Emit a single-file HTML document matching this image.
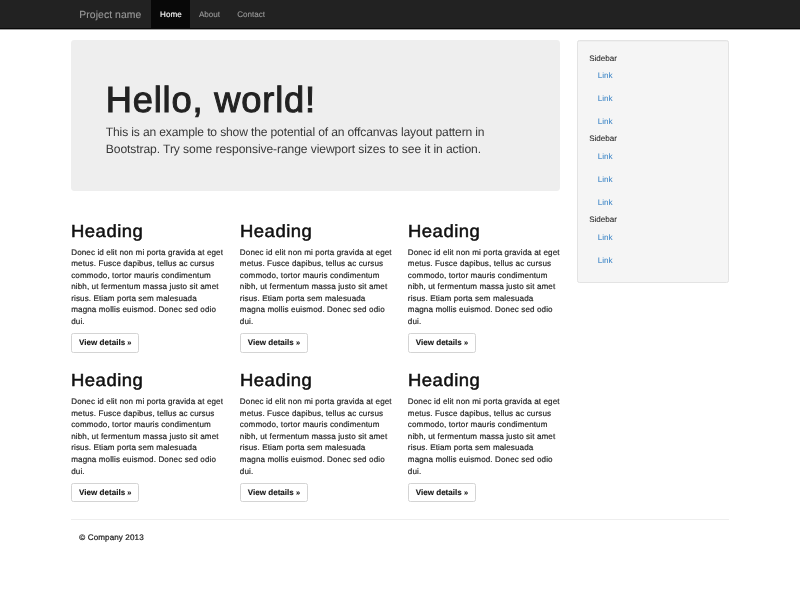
<!DOCTYPE html>
<html><head><meta charset="utf-8"><title>Off Canvas Template for Bootstrap</title>
<style>
*{box-sizing:border-box}
html,body{margin:0;padding:0;background:#fff;overflow:hidden}
#z{zoom:0.5766;-webkit-font-smoothing:antialiased;will-change:transform;text-rendering:geometricPrecision;-webkit-text-stroke-width:0.4px;width:1387px;height:1041px;position:relative;font-family:"Liberation Sans",sans-serif;font-size:14px;line-height:20px;color:#333;overflow:hidden}
.navbar{position:absolute;top:0;left:0;width:1387px;height:51px;background:#222;border-bottom:1px solid #080808}
.brand{position:absolute;left:122.5px;top:2.4px;letter-spacing:0.15px;-webkit-text-stroke-width:0.2px;padding:15px;font-size:18px;line-height:20px;color:#999;white-space:nowrap}
.nav{position:absolute;top:0;left:262.7px;margin:0;padding:0;list-style:none;white-space:nowrap}
.nav li{float:left}
.nav a{display:block;-webkit-text-stroke-width:0.2px;padding:15px;line-height:20px;color:#999;text-decoration:none}
.nav li.active a{background:#080808;color:#fff}
.jumbo{position:absolute;left:123.5px;top:70px;width:847.5px;height:261.2px;background:#eee;border-radius:6px;padding:48px 60px}
.jumbo h1{margin:23.9px 0 6.1px -0.3px;letter-spacing:1.4px;-webkit-text-stroke:1.7px #222;font-size:63px;line-height:63px;font-weight:normal;color:#222;white-space:nowrap}
.jumbo p{margin:0;position:relative;top:4.2px;letter-spacing:-0.2px;-webkit-text-stroke-width:0px;font-size:21px;line-height:29.4px;color:#383838;white-space:nowrap}
.col{position:absolute;width:262.5px}
.col h2{margin:0;position:relative;top:1.6px;letter-spacing:0.85px;-webkit-text-stroke:0.85px #111;transform:scaleX(1.05);transform-origin:0 0;font-size:30.5px;line-height:33px;font-weight:normal;color:#111;white-space:nowrap}
.col p{margin:10px 0 0;position:relative;top:2.2px;letter-spacing:0.2px;-webkit-text-stroke:0.3px #222;color:#222;white-space:nowrap}
.btn{display:inline-block;height:34px;padding:4.8px 12px 7.2px;border:1px solid #d4d4d4;letter-spacing:0px;-webkit-text-stroke-width:0.2px;border-radius:4px;font-weight:bold;color:#111;text-decoration:none;line-height:20px;white-space:nowrap}
.well{position:absolute;left:1001px;top:70px;width:262.5px;height:420px;background:#f5f5f5;border:1px solid #e3e3e3;border-radius:4px;box-shadow:inset 0 1px 1px rgba(0,0,0,.05);padding:19px}
.well ul{margin:0;padding:0;list-style:none}
.well li{line-height:20px;position:relative;top:0.8px;color:#2a2a2a;-webkit-text-stroke-width:0.15px}
.well li a{display:block;padding:10px 15px;color:#3f87c7;-webkit-text-stroke-width:0.1px;text-decoration:none}
hr{position:absolute;left:123.5px;top:900.3px;width:1140px;margin:0;border:0;border-top:1px solid #eee;height:0}
footer{position:absolute;left:137.5px;top:922.8px;letter-spacing:0.2px;color:#222}
footer p{margin:0}
</style></head>
<body><div style="position:absolute;left:0;top:29px;width:800px;height:1px;background:#a0a0a0;z-index:5"></div><div id="z">
<div class="navbar">
  <div class="brand">Project name</div>
  <ul class="nav">
    <li class="active"><a href="#">Home</a></li>
    <li><a href="#">About</a></li>
    <li><a href="#">Contact</a></li>
  </ul>
</div>

<div class="jumbo">
  <h1>Hello, world!</h1>
  <p><span style="letter-spacing:-0.26px">This is an example to show the potential of an offcanvas layout pattern in</span><br><span style="letter-spacing:-0.16px">Bootstrap. Try some responsive-range viewport sizes to see it in action.</span></p>
</div>

<div class="col" style="left:123.5px;top:382.8px">
  <h2>Heading</h2>
  <p>Donec id elit non mi porta gravida at eget<br>metus. Fusce dapibus, tellus ac cursus<br>commodo, tortor mauris condimentum<br>nibh, ut fermentum massa justo sit amet<br>risus. Etiam porta sem malesuada<br>magna mollis euismod. Donec sed odio<br>dui.</p>
  <p><a class="btn" href="#">View details <span style="font-size:13px">&raquo;</span></a></p>
</div>
<div class="col" style="left:416px;top:382.8px">
  <h2>Heading</h2>
  <p>Donec id elit non mi porta gravida at eget<br>metus. Fusce dapibus, tellus ac cursus<br>commodo, tortor mauris condimentum<br>nibh, ut fermentum massa justo sit amet<br>risus. Etiam porta sem malesuada<br>magna mollis euismod. Donec sed odio<br>dui.</p>
  <p><a class="btn" href="#">View details <span style="font-size:13px">&raquo;</span></a></p>
</div>
<div class="col" style="left:707.3px;top:382.8px">
  <h2>Heading</h2>
  <p>Donec id elit non mi porta gravida at eget<br>metus. Fusce dapibus, tellus ac cursus<br>commodo, tortor mauris condimentum<br>nibh, ut fermentum massa justo sit amet<br>risus. Etiam porta sem malesuada<br>magna mollis euismod. Donec sed odio<br>dui.</p>
  <p><a class="btn" href="#">View details <span style="font-size:13px">&raquo;</span></a></p>
</div>
<div class="col" style="left:123.5px;top:642.2px">
  <h2>Heading</h2>
  <p>Donec id elit non mi porta gravida at eget<br>metus. Fusce dapibus, tellus ac cursus<br>commodo, tortor mauris condimentum<br>nibh, ut fermentum massa justo sit amet<br>risus. Etiam porta sem malesuada<br>magna mollis euismod. Donec sed odio<br>dui.</p>
  <p><a class="btn" href="#">View details <span style="font-size:13px">&raquo;</span></a></p>
</div>
<div class="col" style="left:416px;top:642.2px">
  <h2>Heading</h2>
  <p>Donec id elit non mi porta gravida at eget<br>metus. Fusce dapibus, tellus ac cursus<br>commodo, tortor mauris condimentum<br>nibh, ut fermentum massa justo sit amet<br>risus. Etiam porta sem malesuada<br>magna mollis euismod. Donec sed odio<br>dui.</p>
  <p><a class="btn" href="#">View details <span style="font-size:13px">&raquo;</span></a></p>
</div>
<div class="col" style="left:707.3px;top:642.2px">
  <h2>Heading</h2>
  <p>Donec id elit non mi porta gravida at eget<br>metus. Fusce dapibus, tellus ac cursus<br>commodo, tortor mauris condimentum<br>nibh, ut fermentum massa justo sit amet<br>risus. Etiam porta sem malesuada<br>magna mollis euismod. Donec sed odio<br>dui.</p>
  <p><a class="btn" href="#">View details <span style="font-size:13px">&raquo;</span></a></p>
</div>

<div class="well">
  <ul>
    <li>Sidebar</li>
    <li><a href="#">Link</a></li>
    <li><a href="#">Link</a></li>
    <li><a href="#">Link</a></li>
    <li>Sidebar</li>
    <li><a href="#">Link</a></li>
    <li><a href="#">Link</a></li>
    <li><a href="#">Link</a></li>
    <li>Sidebar</li>
    <li><a href="#">Link</a></li>
    <li><a href="#">Link</a></li>
  </ul>
</div>

<hr>
<footer><p>&copy; Company 2013</p></footer>
</div></body></html>
